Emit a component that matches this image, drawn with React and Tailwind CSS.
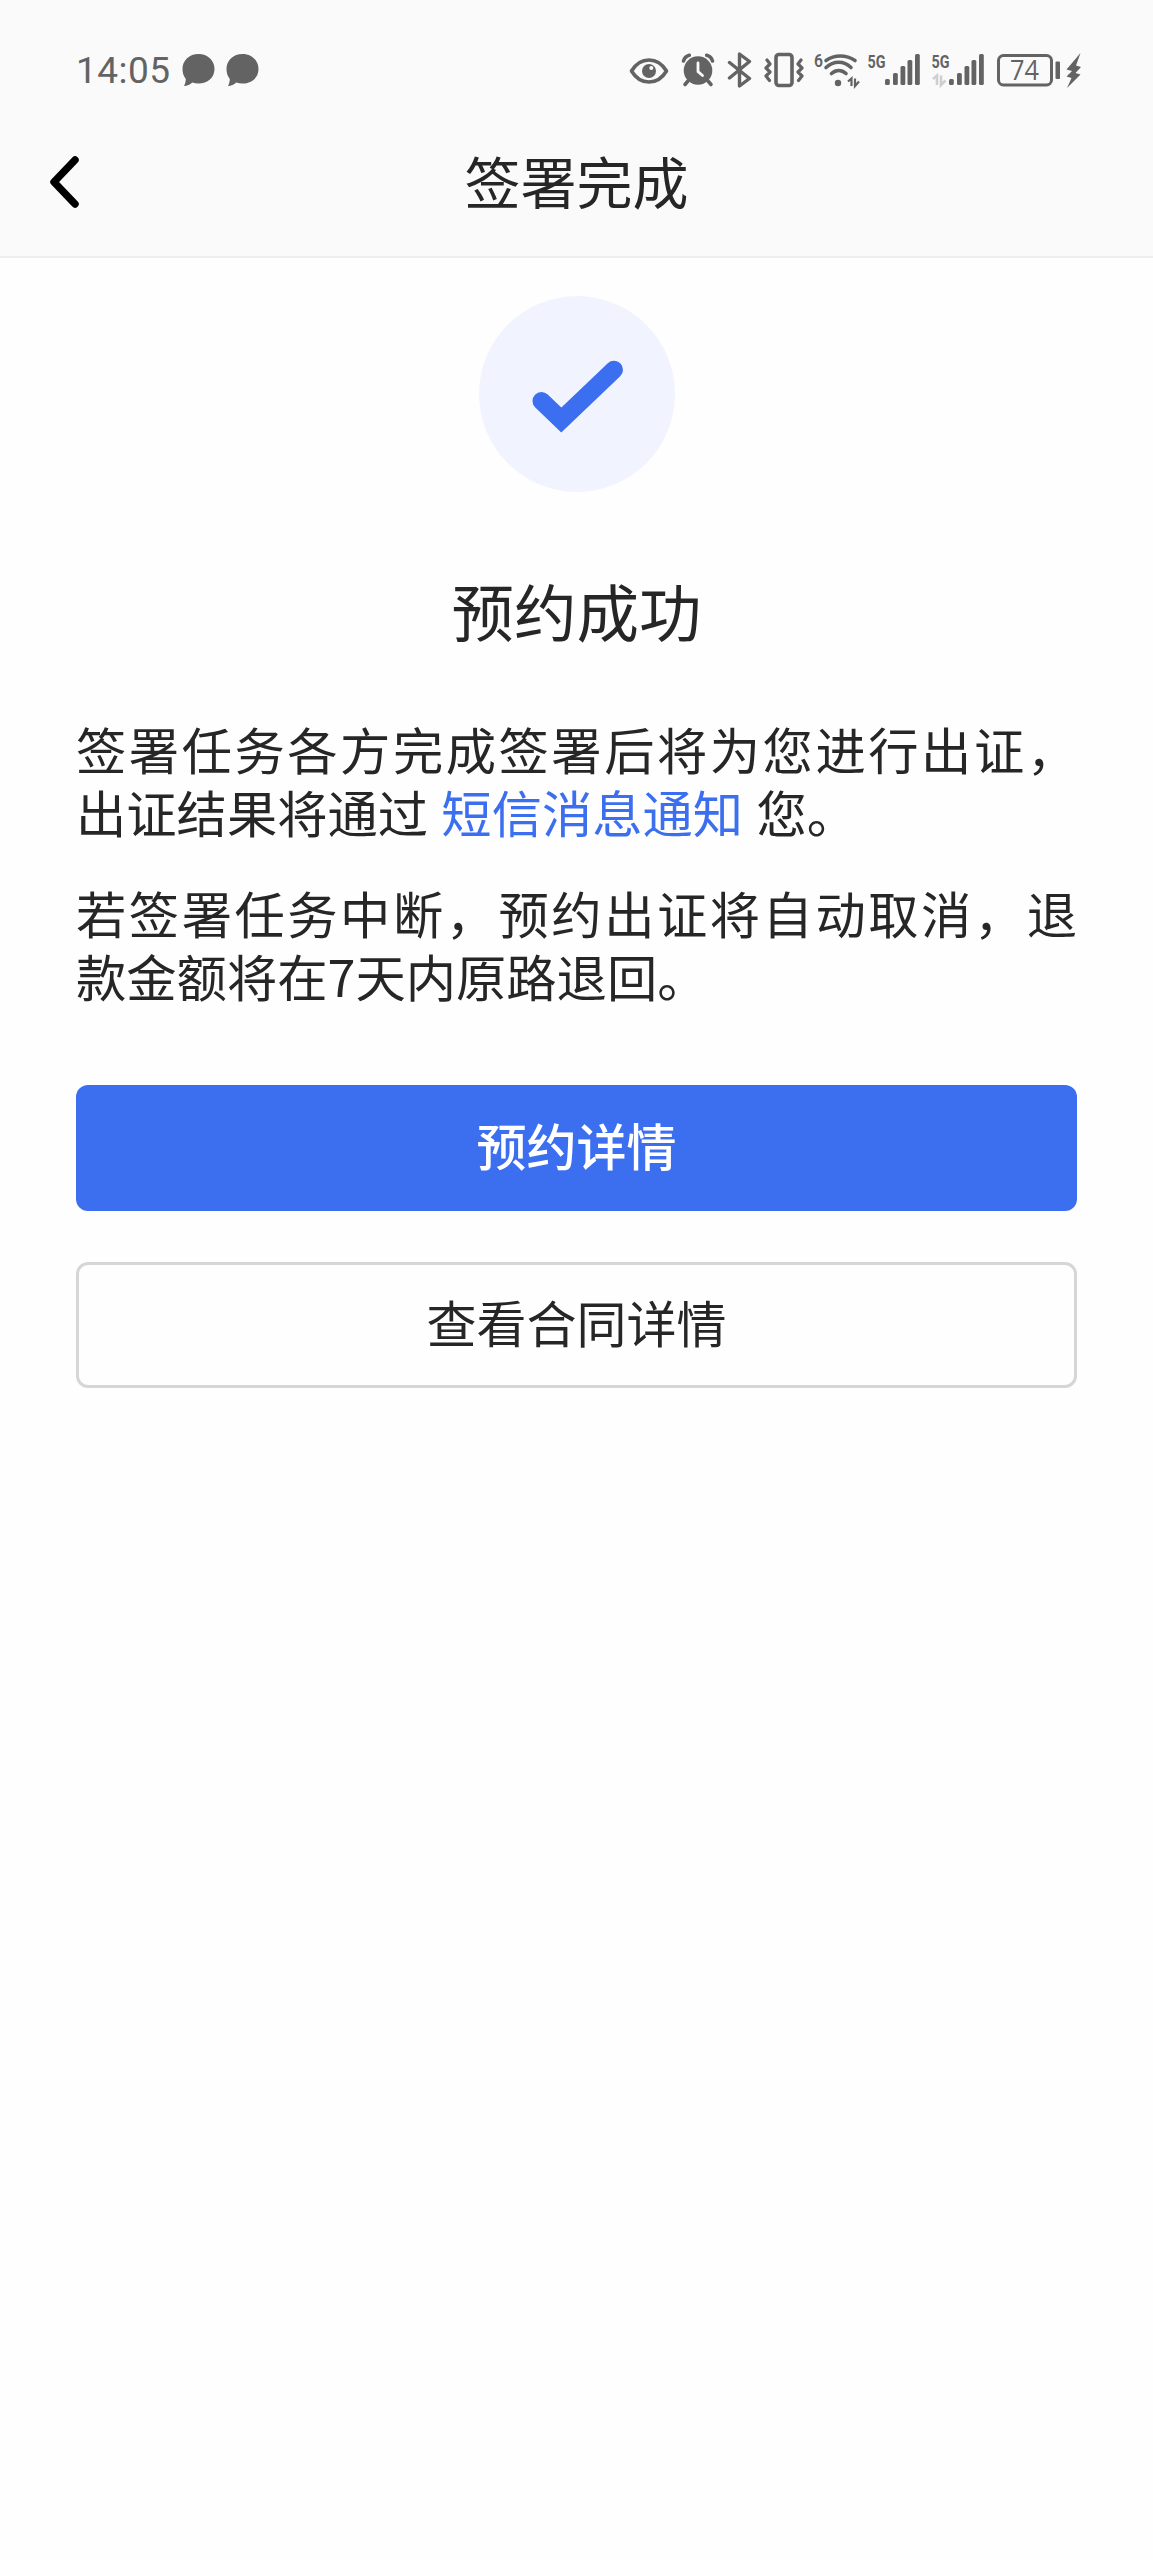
const BARS = [
  { x: 18, y: 27, h: 6 },
  { x: 26, y: 21, h: 12 },
  { x: 33.5, y: 14, h: 19 },
  { x: 40.5, y: 8, h: 25 },
  { x: 48, y: 2, h: 31 },
]

function ChatBubble() {
  return (
    <svg width="33" height="34" viewBox="0 0 33 34" fill="currentColor">
      <path d="M16.5 1C25.6 1 32.5 7.300 32.500 16S25.600 30.500 16.500 30.500c-2.300 0-4.400-.3-6.300-1C8 31.800 5.300 32.800 2 33c1.200-2.500 1.800-4.700 1.800-7C1.600 23.300.5 20 .5 16 .5 7.300 7.400 1 16.500 1z" />
    </svg>
  )
}

function EyeIcon() {
  return (
    <svg width="40" height="36" viewBox="0 0 40 36" fill="none">
      <path d="M2.500 19C7 11.500 13 8 20 8s13 3.500 17.500 11C33 26.500 27 30 20 30S7 26.500 2.500 19z" stroke="currentColor" strokeWidth="3.600" strokeLinejoin="round" />
      <circle cx="20" cy="19" r="7" fill="currentColor" />
      <circle cx="22.300" cy="16" r="2" fill="#fafafa" />
    </svg>
  )
}

function AlarmIcon() {
  return (
    <svg width="34" height="36" viewBox="0 0 34 36" fill="none" stroke="currentColor" strokeLinecap="round">
      <circle cx="17" cy="18.500" r="14.300" fill="currentColor" stroke="none" />
      <path d="M2.500 9C3.500 6 5.500 4 8.300 3.300M31.500 9c-1-3-3-5-5.800-5.700" strokeWidth="3.600" />
      <path d="M7 29l-3 3.500M27 29l3 3.500" strokeWidth="3.600" />
      <path d="M17 11v8.500l4.500 4" stroke="#fafafa" strokeWidth="2.800" />
    </svg>
  )
}

function BluetoothIcon() {
  return (
    <svg width="25" height="36" viewBox="0 0 25 36" fill="none" stroke="currentColor" strokeWidth="3.400" strokeLinecap="round" strokeLinejoin="round">
      <path d="M2.500 10.500L22.500 26.500 12.500 34V2l10 7.500-20 16.500" />
    </svg>
  )
}

function VibrateIcon() {
  return (
    <svg width="40" height="36" viewBox="0 0 40 36" fill="none" stroke="currentColor" strokeLinejoin="round" strokeLinecap="round">
      <rect x="12" y="2.500" width="16" height="31" rx="3" strokeWidth="3.600" />
      <path d="M3 8l3 4-4 4 4 4-4 4 3.500 4.500M37 8l-3 4 4 4-4 4 4 4-3.500 4.500" strokeWidth="3.200" />
    </svg>
  )
}

function WifiIcon() {
  return (
    <svg width="47" height="36" viewBox="0 0 47 36" fill="none" stroke="currentColor" className="overflow-visible">
      <text x="0" y="14.500" fontSize="18" fontWeight="600" fill="currentColor" stroke="none" textLength="9" lengthAdjust="spacingAndGlyphs" fontFamily="Roboto, sans-serif">6</text>
      <path d="M12 8.500c8.500-6 20-6 29 0" strokeWidth="3.600" strokeLinecap="round" />
      <path d="M12 15.500c7.500-7 18-7 25 0" strokeWidth="3.600" strokeLinecap="round" />
      <path d="M17.500 21.500c4.500-4 10-4 14.500 0" strokeWidth="3.600" strokeLinecap="round" />
      <circle cx="24" cy="31" r="3.200" fill="currentColor" stroke="none" />
      <path d="M34 29.500l3.500-3V34M41 26.500V34l4-4.500" strokeWidth="2.200" />
    </svg>
  )
}

function SignalIcon({ data }) {
  return (
    <svg width="54" height="36" viewBox="0 0 54 36" fill="currentColor" className="overflow-visible">
      <text x="0.500" y="15.500" fontSize="19" fontWeight="700" textLength="18" lengthAdjust="spacingAndGlyphs" fontFamily="Roboto, sans-serif">5G</text>
      {data && <path d="M2 27l4-3.500V33M10 23.500V33l4.500-4.500" fill="none" stroke="#cfcfcf" strokeWidth="2.600" />}
      {BARS.map(({ x, y, h }) => (
        <rect key={x} x={x} y={y} width="4.800" height={h} rx="1.500" />
      ))}
    </svg>
  )
}

function BatteryIcon() {
  return (
    <svg width="86" height="36" viewBox="0 0 86 36" fill="none">
      <rect x="1.500" y="3.500" width="53" height="29.500" rx="5" stroke="currentColor" strokeWidth="3" />
      <text x="27.500" y="28" textAnchor="middle" fontSize="26.500" fill="currentColor" textLength="29" lengthAdjust="spacingAndGlyphs" fontFamily="'Open Sans', sans-serif">74</text>
      <rect x="58.500" y="9.500" width="4.500" height="17.500" rx="1" fill="currentColor" />
      <path d="M83.500 1L69.500 17.500l5.500 1.500-5.500 5.500 5 1.500-4.500 10L83.500 22.500l-5-1.500 5.500-6-5-1.500z" fill="currentColor" />
    </svg>
  )
}

function StatusBar() {
  return (
    <div className="flex h-[140px] items-center justify-between pr-[70px] pl-[76px] text-[#636363]">
      <div className="flex items-center gap-[11px]">
        <span className="w-[95px] font-[Roboto,sans-serif] text-[37px] leading-none tracking-[0.5px] whitespace-nowrap">14:05</span>
        <ChatBubble />
        <ChatBubble />
      </div>
      <div className="flex items-center">
        <EyeIcon />
        <div className="ml-3"><AlarmIcon /></div>
        <div className="ml-3"><BluetoothIcon /></div>
        <div className="ml-3"><VibrateIcon /></div>
        <div className="ml-2.5"><WifiIcon /></div>
        <div className="ml-1.5"><SignalIcon /></div>
        <div className="ml-2.5"><SignalIcon data /></div>
        <div className="ml-3"><BatteryIcon /></div>
      </div>
    </div>
  )
}

export default function App() {
  return (
    <div lang="zh-CN" className="min-h-screen bg-[#fefefe] font-['Noto_Sans_CJK_SC',sans-serif] text-[#262626]">
      {/* Header */}
      <header className="h-[258px] border-b-2 border-[#eeeeee] bg-[#fafafa]">
        <StatusBar />
        <div className="grid h-[84px] grid-cols-[1fr_auto_1fr] items-center">
          <button className="ml-[49px] w-[31px]" aria-label="返回">
            <svg width="31" height="52" viewBox="0 0 31 52" fill="none" stroke="#000" strokeWidth="7.500" strokeLinecap="round" strokeLinejoin="round">
              <path d="M26 4L5 26l21 22" />
            </svg>
          </button>
          <h1 className="pb-1 text-[56px] leading-none">签署完成</h1>
        </div>
      </header>

      <main className="flex flex-col px-[76px] pt-[38px]">
        {/* Result */}
        <div className="size-[196px] self-center rounded-full bg-[#f1f4fe]">
          <svg viewBox="0 0 196 196" fill="none" stroke="#3c6ef0" strokeWidth="18" strokeLinecap="round">
            <path d="M62.500 105L82.300 124 135 73.700" />
          </svg>
        </div>
        <h2 className="mt-[73px] text-center text-[62.500px] leading-[90px]">预约成功</h2>

        <div className="mt-[62px] flex flex-col gap-[38px] text-justify text-[50.300px] leading-[63px] [word-spacing:2px]">
          <p>
            签署任务各方完成签署后将为您进行出证，出证结果将通过 <span className="text-[#3c6ef0]">短信消息通知</span> 您。
          </p>
          <p>若签署任务中断，预约出证将自动取消，退款金额将在7天内原路退回。</p>
        </div>

        {/* Actions */}
        <button className="mt-[78px] h-[126px] rounded-xl bg-[#3c6ef0] pb-2 text-[50px] font-medium text-white">预约详情</button>
        <button className="mt-[51px] h-[126px] rounded-xl border-[3px] border-[#d6d6d6] pb-2 text-[50px]">查看合同详情</button>
      </main>
    </div>
  )
}
